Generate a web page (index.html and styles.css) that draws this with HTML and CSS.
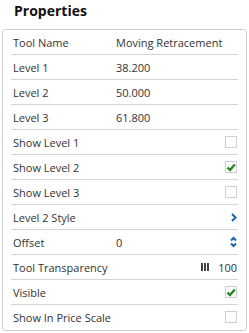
FILE: index.html
```html
<!DOCTYPE html>
<html lang="en">
<head>
  <meta charset="UTF-8" />
  <title>Properties</title>
  <link rel="stylesheet" href="styles.css">
</head>
<body>
  <div class="title">Properties</div>

  <div class="panel">
    <div class="row"><span class="label">Tool Name</span><span class="value">Moving Retracement</span></div>
    <div class="row"><span class="label">Level 1</span><span class="value">38.200</span></div>
    <div class="row"><span class="label">Level 2</span><span class="value">50.000</span></div>
    <div class="row"><span class="label">Level 3</span><span class="value">61.800</span></div>
    <div class="row"><span class="label">Show Level 1</span><span class="check"></span></div>
    <div class="row"><span class="label">Show Level 2</span>
      <span class="check">
        <svg width="10" height="10" viewBox="0 0 10 10"><path d="M1.5 5.5 L4 8 L8.8 2.5" fill="none" stroke="#1e8c1e" stroke-width="2.4"/></svg>
      </span>
    </div>
    <div class="row"><span class="label">Show Level 3</span><span class="check"></span></div>
    <div class="row"><span class="label">Level 2 Style</span>
      <svg class="icon" width="6" height="9" viewBox="0 0 6 9"><path d="M1 1 L4.5 4.5 L1 8" fill="none" stroke="#1565b0" stroke-width="2"/></svg>
    </div>
    <div class="row"><span class="label">Offset</span><span class="value">0</span>
      <svg class="icon" width="7" height="12" viewBox="0 0 7 12"><path d="M1 4.5 L3.5 2 L6 4.5 M1 7.5 L3.5 10 L6 7.5" fill="none" stroke="#1565b0" stroke-width="2"/></svg>
    </div>
    <div class="row"><span class="label">Tool Transparency</span>
      <span class="slider"><i></i><i></i><i></i></span><span class="num">100</span>
    </div>
    <div class="row"><span class="label">Visible</span>
      <span class="check">
        <svg width="10" height="10" viewBox="0 0 10 10"><path d="M1.5 5.5 L4 8 L8.8 2.5" fill="none" stroke="#1e8c1e" stroke-width="2.4"/></svg>
      </span>
    </div>
    <div class="row"><span class="label">Show In Price Scale</span><span class="check"></span></div>
  </div>
</body>
</html>
```

FILE: styles.css
```css
body {
  margin: 0;
  font-family: "Open Sans", sans-serif;
  background: #fff;
  color: #333;
}

.title {
  height: 29px;
  box-sizing: border-box;
  padding: 1px 0 0 14px;
  font-size: 14px;
  font-weight: bold;
  color: #111;
}

.panel {
  margin: 0 2px;
  border: 1px solid #d0d0d0;
  border-radius: 3px;
  padding-bottom: 1px;
}

.row {
  display: flex;
  align-items: center;
  height: 24px;
  margin: 0 8px;
  padding: 0 1px 0 2px;
  border-bottom: 1px solid #d4d4d4;
  font-size: 11px;
}

.row:last-child {
  border-bottom: none;
}

.label {
  width: 103px;
  flex-shrink: 0;
}

.value {
  flex: 1;
}

.check {
  margin-left: auto;
  width: 10px;
  height: 10px;
  border: 1px solid #cfcfcf;
  display: flex;
  align-items: center;
  justify-content: center;
}

.icon {
  margin-left: auto;
}

.slider {
  margin-left: auto;
  display: flex;
  gap: 1px;
  margin-right: 9px;
}

.slider i {
  width: 2px;
  height: 8px;
  background: #444;
}

.num {
  color: #333;
}
```
